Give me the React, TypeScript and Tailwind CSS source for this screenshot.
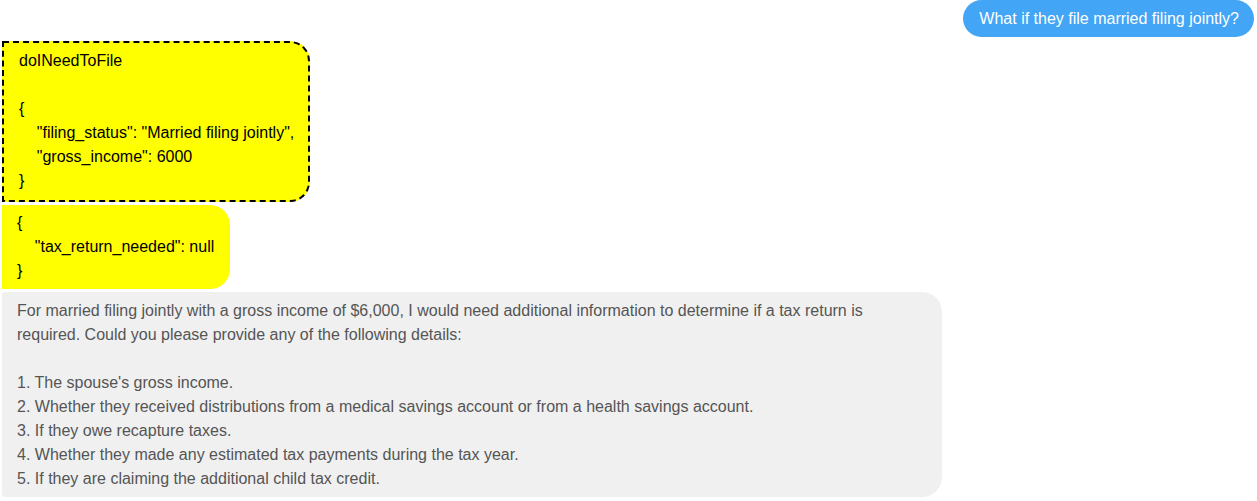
import React from "react";

export default function App() {
  const font = { fontFamily: '"Liberation Sans", Arial, sans-serif' };
  return (
    <div className="w-[1257px] h-[501px] bg-white overflow-hidden pl-[2px] pr-[3px] flex flex-col text-[16px] leading-[24px]" style={font}>
      <div className="flex justify-end">
        <div className="bg-[#42a5f5] text-white rounded-[19px] pt-[7px] pb-[6px] pl-[16px] pr-[15px]">
          What if they file married filing jointly?
        </div>
      </div>
      <div className="mt-[4px] flex">
        <div className="bg-[#ffff00] text-black border-2 border-dashed border-black rounded-r-[20px] pt-[6px] pb-[7px] pl-[15px] pr-[14px] whitespace-pre">
{`doINeedToFile

{
    "filing_status": "Married filing jointly",
    "gross_income": 6000
}`}
        </div>
      </div>
      <div className="mt-[3px] flex">
        <div className="bg-[#ffff00] text-black rounded-r-[20px] py-[6px] pl-[15px] pr-[16px] whitespace-pre">
{`{
    "tax_return_needed": null
}`}
        </div>
      </div>
      <div className="mt-[3px] flex">
        <div className="w-[940px] bg-[#f0f0f0] text-[#555555] rounded-r-[20px] rounded-l-[3px] pt-[7px] pb-[6px] pl-[15px] pr-[15px] whitespace-pre-wrap">
{`For married filing jointly with a gross income of $6,000, I would need additional information to determine if a tax return is required. Could you please provide any of the following details:

1. The spouse's gross income.
2. Whether they received distributions from a medical savings account or from a health savings account.
3. If they owe recapture taxes.
4. Whether they made any estimated tax payments during the tax year.
5. If they are claiming the additional child tax credit.`}
        </div>
      </div>
    </div>
  );
}
